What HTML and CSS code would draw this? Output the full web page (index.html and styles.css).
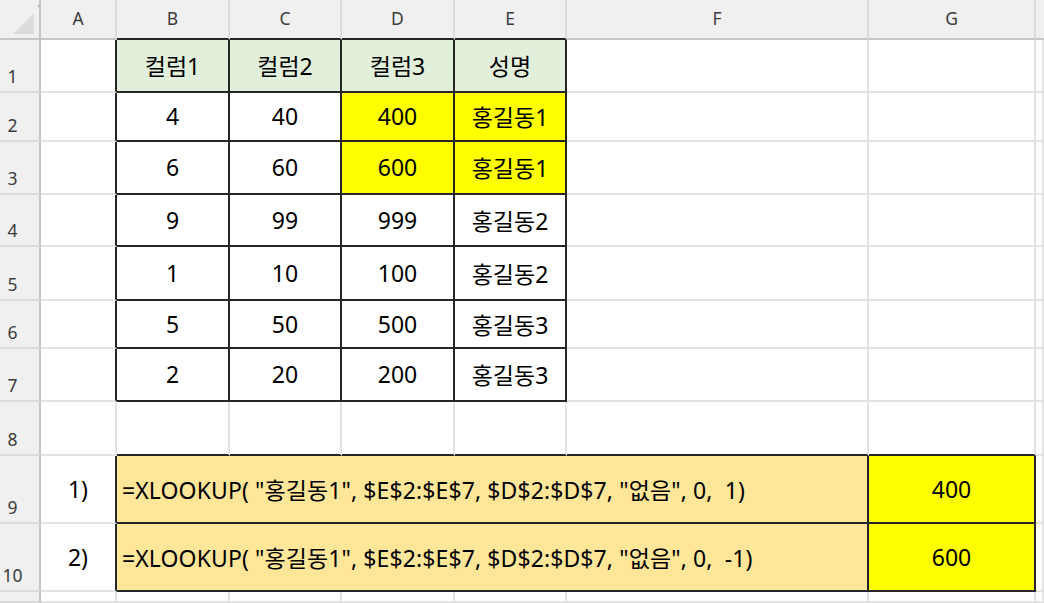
FILE: index.html
```html
<!DOCTYPE html>
<html lang="ko">
<head>
<meta charset="utf-8">
<title>XLOOKUP</title>
<link rel="stylesheet" href="styles.css">
</head>
<body>
<div class="sheet">
  <!-- header row -->
  <div class="corner"><svg class="tri" width="24" height="24" viewBox="0 0 24 24"><polygon points="22,1 22,22 1,22" fill="#dcdcdc"/></svg><span class="dot"></span></div>
  <div class="ch">A</div>
  <div class="ch dt">B</div>
  <div class="ch dt">C</div>
  <div class="ch dt">D</div>
  <div class="ch dt">E</div>
  <div class="ch">F</div>
  <div class="ch">G</div>
  <div class="ch last"></div>

  <!-- row 1 -->
  <div class="rh">1</div>
  <div class="c dl"></div>
  <div class="c t g">컬럼1</div>
  <div class="c t g">컬럼2</div>
  <div class="c t g">컬럼3</div>
  <div class="c t g">성명</div>
  <div class="c"></div>
  <div class="c"></div>
  <div class="c"></div>

  <!-- row 2 -->
  <div class="rh">2</div>
  <div class="c dl"></div>
  <div class="c t">4</div>
  <div class="c t">40</div>
  <div class="c t y">400</div>
  <div class="c t y">홍길동1</div>
  <div class="c"></div>
  <div class="c"></div>
  <div class="c"></div>

  <!-- row 3 -->
  <div class="rh">3</div>
  <div class="c dl"></div>
  <div class="c t">6</div>
  <div class="c t">60</div>
  <div class="c t y">600</div>
  <div class="c t y">홍길동1</div>
  <div class="c"></div>
  <div class="c"></div>
  <div class="c"></div>

  <!-- row 4 -->
  <div class="rh">4</div>
  <div class="c dl"></div>
  <div class="c t">9</div>
  <div class="c t">99</div>
  <div class="c t">999</div>
  <div class="c t">홍길동2</div>
  <div class="c"></div>
  <div class="c"></div>
  <div class="c"></div>

  <!-- row 5 -->
  <div class="rh">5</div>
  <div class="c dl"></div>
  <div class="c t">1</div>
  <div class="c t">10</div>
  <div class="c t">100</div>
  <div class="c t">홍길동2</div>
  <div class="c"></div>
  <div class="c"></div>
  <div class="c"></div>

  <!-- row 6 -->
  <div class="rh">6</div>
  <div class="c dl"></div>
  <div class="c t">5</div>
  <div class="c t">50</div>
  <div class="c t">500</div>
  <div class="c t">홍길동3</div>
  <div class="c"></div>
  <div class="c"></div>
  <div class="c"></div>

  <!-- row 7 -->
  <div class="rh">7</div>
  <div class="c dl"></div>
  <div class="c t">2</div>
  <div class="c t">20</div>
  <div class="c t">200</div>
  <div class="c t">홍길동3</div>
  <div class="c"></div>
  <div class="c"></div>
  <div class="c"></div>

  <!-- row 8 -->
  <div class="rh">8</div>
  <div class="c"></div>
  <div class="c dt"></div>
  <div class="c dt"></div>
  <div class="c dt"></div>
  <div class="c dt"></div>
  <div class="c dt"></div>
  <div class="c dt"></div>
  <div class="c"></div>

  <!-- row 9 -->
  <div class="rh">9</div>
  <div class="c dl">1)</div>
  <div class="c t o f">=XLOOKUP( "홍길동1", $E$2:$E$7, $D$2:$D$7, "없음", 0,&nbsp; 1)</div>
  <div class="c t y">400</div>
  <div class="c"></div>

  <!-- row 10 -->
  <div class="rh">10</div>
  <div class="c dl">2)</div>
  <div class="c t o f">=XLOOKUP( "홍길동1", $E$2:$E$7, $D$2:$D$7, "없음", 0,&nbsp; -1)</div>
  <div class="c t y">600</div>
  <div class="c"></div>

  <!-- row 11 (partial) -->
  <div class="rh"></div>
  <div class="c"></div>
  <div class="c"></div>
  <div class="c"></div>
  <div class="c"></div>
  <div class="c"></div>
  <div class="c"></div>
  <div class="c"></div>
  <div class="c"></div>
</div>
</body>
</html>
```

FILE: styles.css
```css
html, body {
  margin: 0;
  padding: 0;
  background: #ffffff;
}

body {
  width: 1044px;
  height: 603px;
  overflow: hidden;
  font-family: "Noto Sans", "Noto Sans CJK KR", sans-serif;
  color: #000000;
}

.sheet {
  display: grid;
  grid-template-columns: 41px 76px 113px 112px 113px 112px 302px 167px 8px;
  grid-template-rows: 40px 53px 49px 53px 52px 54px 48px 53px 54px 68px 68px 11px;
  width: 1044px;
  height: 603px;
}

.sheet > div {
  box-sizing: border-box;
  min-width: 0;
  overflow: hidden;
  white-space: nowrap;
}

/* corner */
.corner {
  position: relative;
  background: #f0f0f0;
  border-right: 2px solid #c6c6c6;
  border-bottom: 2px solid #c6c6c6;
}

.tri {
  position: absolute;
  left: 12px;
  top: 12px;
}

.dot {
  position: absolute;
  left: 38px;
  top: 5px;
  width: 2px;
  height: 2px;
  background: #777777;
  border-radius: 1px;
}

/* column headers */
.ch {
  background: #f0f0f0;
  border-right: 2px solid #dcdcdc;
  border-bottom: 2px solid #c6c6c6;
  display: flex;
  align-items: center;
  justify-content: center;
  padding-bottom: 2px;
  font-size: 17.5px;
  color: #3c3c3c;
}

.ch.last {
  border-right: none;
}

/* row headers */
.rh {
  background: #f0f0f0;
  border-right: 2px solid #c6c6c6;
  border-bottom: 2px solid #dcdcdc;
  display: flex;
  align-items: flex-end;
  justify-content: center;
  padding: 0 14px 3px 0;
  font-size: 17.5px;
  color: #3c3c3c;
}

/* cells */
.c {
  border-right: 2px solid #e3e3e3;
  border-bottom: 2px solid #e3e3e3;
  display: flex;
  align-items: center;
  justify-content: center;
  font-size: 23px;
  padding-bottom: 1px;
}

.sheet > .dl {
  border-right-color: #262626;
}

.sheet > .dt {
  border-bottom-color: #262626;
}

.sheet > .t {
  border-right-color: #262626;
  border-bottom-color: #262626;
}

.g {
  background: #e2efda;
}

.y {
  background: #ffff00;
}

.o {
  background: #ffe699;
}

.f {
  grid-column: 3 / 8;
  justify-content: flex-start;
  padding-left: 5px;
  letter-spacing: 0.1px;
}
```
